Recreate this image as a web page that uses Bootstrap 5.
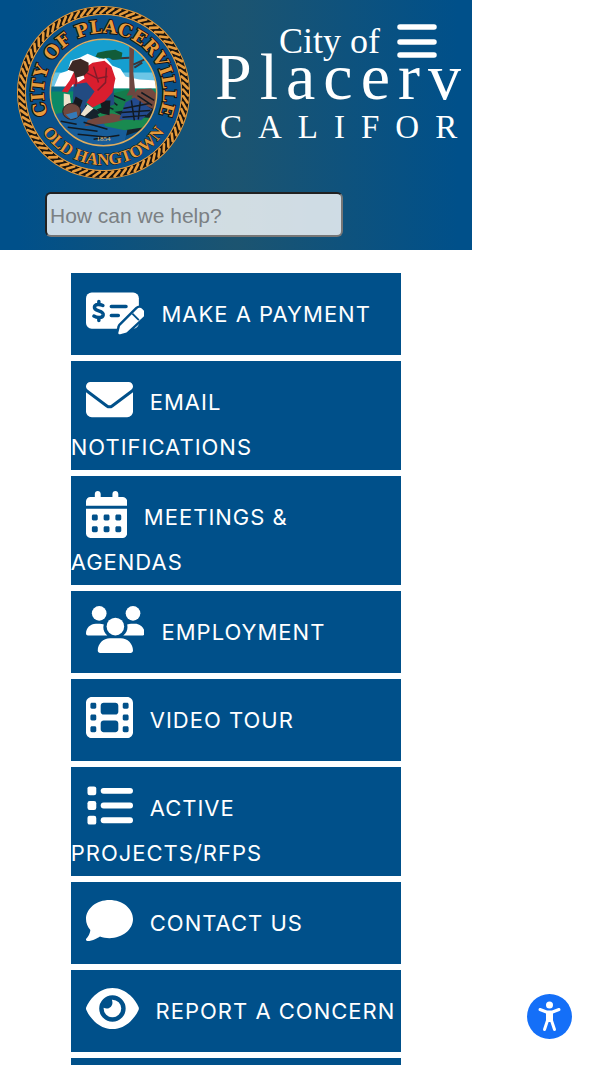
<!DOCTYPE html>
<html lang="en">
<head>
<meta charset="utf-8">
<meta name="viewport" content="width=device-width, initial-scale=1">
<title>City of Placerville</title>
<link href="https://cdn.jsdelivr.net/npm/bootstrap@5.3.0/dist/css/bootstrap.min.css" rel="stylesheet">
<style>
  body { font-family: Inter, "Open Sans", sans-serif; background: #fff; }
  .site { width: 78.6%; }
  .masthead { background: linear-gradient(90deg, #00508a 4%, #1c5470 50%, #00508a 97%); padding: 5px 6px 13px 16px; }
  .seal { width: 175px; height: 175px; }
  .wordmark { font-family: "Liberation Serif", serif; margin-left: 24px; padding-top: 16px; white-space: nowrap; min-width: 0; overflow-x: clip; }
  .city { font-size: 36px; line-height: 40px; padding-left: 64px; gap: 17px; }
  .town { font-size: 66px; line-height: 32px; letter-spacing: 8px; }
  .state { font-size: 33px; line-height: 68px; letter-spacing: 16px; padding-left: 5px; }
  .menu-btn { width: 40px; height: 34px; }
  .search { width: 298px; height: 45px; margin: 12px 0 0 29px; padding: 5px 3px 2px; border: 2px inset #767676; border-radius: 6px; background: rgba(255,255,255,.8); font: 21px "Liberation Sans", sans-serif; }
  .search::placeholder { color: #7b8083; opacity: 1; }
  .tiles { width: 70%; gap: 6px; margin-top: 23px; }
  .tile { background: #00508a; min-height: 82px; padding: 15px 3px 0 0; font-size: 22px; line-height: 45px; letter-spacing: 1px; }
  .tile svg { height: 47px; margin: 0 17px 0 15px; vertical-align: -13px; fill: #fff; }
  .access { right: 28px; bottom: 26px; width: 45px; height: 45px; }
</style>
</head>
<body>
<div class="vh-100 overflow-hidden">
<div class="site">
  <header class="masthead overflow-hidden">
    <div class="d-flex align-items-start">
      <a href="#" class="flex-shrink-0 d-block lh-1" aria-label="City of Placerville home">
        <svg class="seal" viewBox="-88 -88 176 176">
          <defs>
            <clipPath id="scene"><circle r="53"/></clipPath>
            <path id="arcTop" d="M0 60A60 60 0 0 1 0-60A60 60 0 0 1 0 60"/>
            <path id="arcBottom" d="M-73 0A73 73 0 0 0 73 0"/>
          </defs>
          <circle r="87" fill="#e69b3c"/>
          <circle r="82.500" fill="none" stroke="#17130f" stroke-width="7"/>
          <g id="rope" stroke="#e69b3c" stroke-width="2.600" stroke-linecap="round"></g>
          <circle r="78.500" fill="#09518a" stroke="#e69b3c" stroke-width="1"/>
          <g font-weight="700" fill="#e69b3c" stroke="#17130f" stroke-width="2" paint-order="stroke" text-anchor="middle">
            <text font-family="DejaVu Serif, serif" font-size="18"><textPath href="#arcTop" startOffset="50%">CITY OF PLACERVILLE</textPath></text>
            <text font-family="Liberation Serif, serif" font-size="17" stroke-width="1"><textPath href="#arcBottom" startOffset="50%">OLD HANGTOWN</textPath></text>
          </g>
          <g clip-path="url(#scene)">
            <path fill="#159fd0" d="M-55-55H55V0H-55z"/>
            <path fill="#6cc6e6" d="M-55-20H55V0H-55z"/>
            <path fill="#fff" d="M-50-5l6-14 8-3 3-10 9-3 8-4 12 5 6-1 7 8 8 3 5 8 14 3 18 1v8H-50z"/>
            <path fill="#0c8a66" d="M-55-4H55V25H-55z"/>
            <path fill="#0a6a8a" d="M-55-6h40v5h-40z"/>
            <path fill="#157c4c" d="M5 2l20-5 10 9 20-2V35H-5z"/>
            <path fill="#16222c" d="M-40 20l22-8 18 9 20-3 20-18 15 2v30l-40 14-55-6z"/>
            <path fill="#175d9a" d="M-50 22l14-3 20 7 18 4 22 8-5 20h-70z"/>
            <path fill="#198a50" d="M-6 22l10-6 14 7 32 3-9 9-20 3-19-4z"/>
            <path fill="#74483f" d="M-16 28l24-7 10 2 18-4-6 6-19 5-30 4z"/>
            <path fill="#74483f" d="M34-3l14-1 8 8v15l-14-6-14-8z"/>
            <path fill="#234b8f" d="M22 10l9-5 18 12-11 11-22-1z"/>
            <path stroke="#111a22" stroke-width="1.500" fill="none" d="M20 16l26-5M18 20l29-2M19 25l24-2M28 8l3 20M37 9l-2 18M-43 29l16 3M-36 35l30 4M-20 30l24 7M-26 42l30 3M-10 47l26-4M5 6l9 7M10 3l12 5M-1 12l11 5M38 0l13 8M34 3l15 10"/>
            <path fill="#6c4640" d="M26-50h5l-1 30 2 20 4 3h-13l3-5z"/>
            <path stroke="#3d3438" stroke-width="2" fill="none" d="M8-34l18-1M30-28l11-5M31-25l8-5"/>
            <path fill="#125c38" d="M-6-40l9-2 9-1 7 3-1 6-8 1-5-2-5 1-8-2z"/>
            <path fill="#224b82" d="M-30-11l18-3 22 7 1 19-9 3-10-12-8 4-5 15-10-8z"/>
            <path fill="#16191f" d="M-28 4l7 4-4 11-7-4zM-4 8h11l-1 15-8-2-5-4 5-2z"/>
            <path fill="#d91e2e" d="M-34-12l4-8 10-4 9-6 12-2 7 6 4 12-3 14-8 9-12 6-6-5 8-11-8-9-14 2-5 8-6-1z"/>
            <path stroke="#811c2a" stroke-width="1.500" fill="none" d="M-19-21l13 7 10-2M-10-26l5 16M3-25l-1 15-8 8M-27-17l-1 11"/>
            <path fill="#eee4cf" d="M-40 1l6 1 2 13-4 5-4-7zM-16 12l6 4-9 8-4-2z"/>
            <path fill="#3e2824" d="M-36-23l5-9 8-2 8 4v8l-6 7-7 1-2-7z"/>
            <path fill="#fff" d="M-27-15l7-2 1 3-7 4z"/>
            <ellipse cx="-32" cy="19" rx="9" ry="8" fill="#70483e" stroke="#2b2222"/>
            <path fill="#347ab8" d="M-38 22l11-3 1 6-7 2z"/>
            <text x="0" y="49" font-size="7" fill="#e2c17e" text-anchor="middle" font-family="Liberation Serif, serif">1854</text>
          </g>
          <circle r="53.500" fill="none" stroke="#dfae60" stroke-width="1.500"/>
        </svg>
      </a>
      <div class="wordmark">
        <div class="city d-flex align-items-center text-white"><span>City of</span>
          <button type="button" class="menu-btn btn p-0 border-0 d-flex flex-shrink-0" aria-label="Menu">
            <svg width="40" height="34" viewBox="0 0 40 34" stroke="#fff" stroke-width="5.500" stroke-linecap="round"><path d="M3 3h34M3 18h34M3 31h34"/></svg>
          </button>
        </div>
        <div class="town text-white">Placerville</div>
        <div class="state text-white">CALIFORNIA</div>
      </div>
    </div>
    <input class="search d-block" type="search" placeholder="How can we help?" aria-label="How can we help?">
  </header>

  <nav class="tiles mx-auto d-flex flex-column" aria-label="Quick links">
    <a href="#" class="tile d-block text-white text-decoration-none"><svg viewBox="0 0 640 512"><rect y="50" width="576" height="394" rx="62"/><g fill="none" stroke="#00508a" stroke-width="38" stroke-linecap="round"><path d="M184 190c-26-13-86-22-92 17-7 53 102 31 95 86-6 40-68 34-101 13M140 147v32M140 325v30"/><path d="M276 202h160M276 300h76"/></g><g transform="translate(0 50)"><path d="M613 178c-16-16-41-16-57 0L376 359c-4 4-7 9-8 15l-15 60c-5 13 6 23 19 19l60-15c6-1 11-4 15-8L642 249c16-16 0-42-29-71z" stroke="#00508a" stroke-width="52" paint-order="stroke"/><path d="M505 230l71 71" stroke="#00508a" stroke-width="20"/></g></svg>MAKE A PAYMENT</a>
    <a href="#" class="tile d-block text-white text-decoration-none"><svg viewBox="0 0 512 512"><path d="M48 64C21.500 64 0 85.500 0 112c0 15.100 7.100 29.300 19.200 38.400L236.800 313.600c11.400 8.500 27 8.500 38.400 0L492.800 150.400c12.100-9.100 19.200-23.300 19.200-38.400 0-26.500-21.500-48-48-48zM0 176V384c0 35.300 28.700 64 64 64H448c35.300 0 64-28.700 64-64V176L294.400 339.200c-22.800 17.100-54 17.100-76.800 0z"/></svg>EMAIL NOTIFICATIONS</a>
    <a href="#" class="tile d-block text-white text-decoration-none"><svg viewBox="0 0 448 512"><path fill-rule="evenodd" d="M128 0c18 0 32 14 32 32V64H288V32c0-18 14-32 32-32s32 14 32 32V64h48c26 0 48 22 48 48v48H0V112C0 86 22 64 48 64H96V32C96 14 110 0 128 0zM0 192H448V464c0 26-22 48-48 48H48c-26 0-48-22-48-48zM64 272v32c0 9 7 16 16 16h32c9 0 16-7 16-16V272c0-9-7-16-16-16H80c-9 0-16 7-16 16zm128 0v32c0 9 7 16 16 16h32c9 0 16-7 16-16V272c0-9-7-16-16-16H208c-9 0-16 7-16 16zm128 0v32c0 9 7 16 16 16h32c9 0 16-7 16-16V272c0-9-7-16-16-16H336c-9 0-16 7-16 16zM64 400v32c0 9 7 16 16 16h32c9 0 16-7 16-16V400c0-9-7-16-16-16H80c-9 0-16 7-16 16zm128 0v32c0 9 7 16 16 16h32c9 0 16-7 16-16V400c0-9-7-16-16-16H208c-9 0-16 7-16 16zm128 0v32c0 9 7 16 16 16h32c9 0 16-7 16-16V400c0-9-7-16-16-16H336c-9 0-16 7-16 16z"/></svg>MEETINGS &amp; AGENDAS</a>
    <a href="#" class="tile d-block text-white text-decoration-none"><svg viewBox="0 0 640 512"><circle cx="144" cy="80" r="80"/><circle cx="512" cy="80" r="80"/><circle cx="320" cy="224" r="96"/><path d="M0 298.700C0 239.800 47.800 192 106.700 192h42.600c16 0 31 3.500 44.700 9.700-14 47 2 91 38 118.300H21.300C9.600 320 0 310.400 0 298.700zM405.300 320c41-31 54-77 42.700-118.400 13-6 28-9.600 43-9.600h42.600C592.200 192 640 239.800 640 298.700c0 11.700-9.600 21.300-21.300 21.300zM128 485.300C128 411.700 187.700 352 261.300 352h117.400C452.300 352 512 411.700 512 485.300c0 14.800-12 26.700-26.700 26.700H154.700C139.900 512 128 500 128 485.300z"/></svg>EMPLOYMENT</a>
    <a href="#" class="tile d-block text-white text-decoration-none"><svg viewBox="0 0 512 512"><path fill-rule="evenodd" d="M0 96C0 61 29 32 64 32H448c35 0 64 29 64 64V416c0 35-29 64-64 64H64c-35 0-64-29-64-64zM48 368v32c0 9 7 16 16 16H96c9 0 16-7 16-16V368c0-9-7-16-16-16H64c-9 0-16 7-16 16zm368-16c-9 0-16 7-16 16v32c0 9 7 16 16 16h32c9 0 16-7 16-16V368c0-9-7-16-16-16zM48 240v32c0 9 7 16 16 16H96c9 0 16-7 16-16V240c0-9-7-16-16-16H64c-9 0-16 7-16 16zm368-16c-9 0-16 7-16 16v32c0 9 7 16 16 16h32c9 0 16-7 16-16V240c0-9-7-16-16-16zM48 112v32c0 9 7 16 16 16H96c9 0 16-7 16-16V112c0-9-7-16-16-16H64c-9 0-16 7-16 16zm368-16c-9 0-16 7-16 16v32c0 9 7 16 16 16h32c9 0 16-7 16-16V112c0-9-7-16-16-16zM160 128v64c0 18 14 32 32 32H320c18 0 32-14 32-32V128c0-18-14-32-32-32H192c-18 0-32 14-32 32zm32 160c-18 0-32 14-32 32v64c0 18 14 32 32 32H320c18 0 32-14 32-32V320c0-18-14-32-32-32z"/></svg>VIDEO TOUR</a>
    <a href="#" class="tile d-block text-white text-decoration-none"><svg viewBox="0 0 512 512"><rect x="16" y="48" width="96" height="96" rx="24"/><rect x="16" y="208" width="96" height="96" rx="24"/><rect x="16" y="368" width="96" height="96" rx="24"/><rect x="160" y="64" width="352" height="64" rx="32"/><rect x="160" y="224" width="352" height="64" rx="32"/><rect x="160" y="384" width="352" height="64" rx="32"/></svg>ACTIVE PROJECTS/RFPS</a>
    <a href="#" class="tile d-block text-white text-decoration-none"><svg viewBox="0 0 512 512"><path d="M512 240c0 114.900-114.600 208-256 208-37.100 0-72.300-6.400-104.100-17.900-11.900 8.700-31.300 20.600-54.300 30.600C73.600 471.100 44.700 480 16 480c-14 0-22-17-11.300-27.300C20 437 36 412 43 385c3-11 4-21 4-26C17 326 0 285 0 240 0 125.100 114.600 32 256 32s256 93.100 256 208z"/></svg>CONTACT US</a>
    <a href="#" class="tile d-block text-white text-decoration-none"><svg viewBox="0 0 576 512"><path fill-rule="evenodd" d="M288 32c-80.800 0-145.500 36.800-192.600 80.600C48.600 156 17.300 208 2.500 243.700c-3.300 7.900-3.300 16.700 0 24.600C17.300 304 48.600 356 95.400 399.400 142.500 443.200 207.200 480 288 480s145.500-36.800 192.600-80.600c46.800-43.500 78.100-95.400 93-131.100 3.300-7.900 3.300-16.700 0-24.600-14.900-35.700-46.200-87.700-93-131.100C433.500 68.800 368.800 32 288 32zM144 256a144 144 0 1 1 288 0 144 144 0 1 1-288 0z"/><path d="M288 160c-2 0-5 0-6 1 3 10 6 20 6 31 0 35-29 64-64 64-11 0-21-3-31-8-1 3-1 6-1 8a96 96 0 1 0 96-96z"/></svg>REPORT A CONCERN</a>
    <div class="tile"></div>
  </nav>
</div>
</div>
<button type="button" class="access btn p-0 border-0 rounded-circle position-fixed d-flex" aria-label="Accessibility options">
  <svg width="45" height="45" viewBox="0 0 45 45"><circle cx="22.500" cy="22.500" r="22.500" fill="#146ff8"/><circle cx="22.500" cy="11" r="3.500" fill="#fff"/><path fill="none" stroke="#fff" stroke-width="3" stroke-linecap="round" stroke-linejoin="round" d="M13 15.500l6.500 2.500h6l6.500-2.500M20.500 18.500v8l-3 9M24.500 18.500v8l3 9"/><path fill="#fff" d="M19 17h7v11h-7z"/></svg>
</button>
<script src="https://cdn.jsdelivr.net/npm/bootstrap@5.3.0/dist/js/bootstrap.bundle.min.js"></script>
<script>
  // Twisted strands of the rope border around the seal
  const rope = document.getElementById('rope');
  for (let i = 0; i < 76; i++) {
    const strand = document.createElementNS('http://www.w3.org/2000/svg', 'path');
    strand.setAttribute('d', 'M-3 -80L3 -85');
    strand.setAttribute('transform', `rotate(${i * 360 / 76})`);
    rope.append(strand);
  }
</script>
</body>
</html>
